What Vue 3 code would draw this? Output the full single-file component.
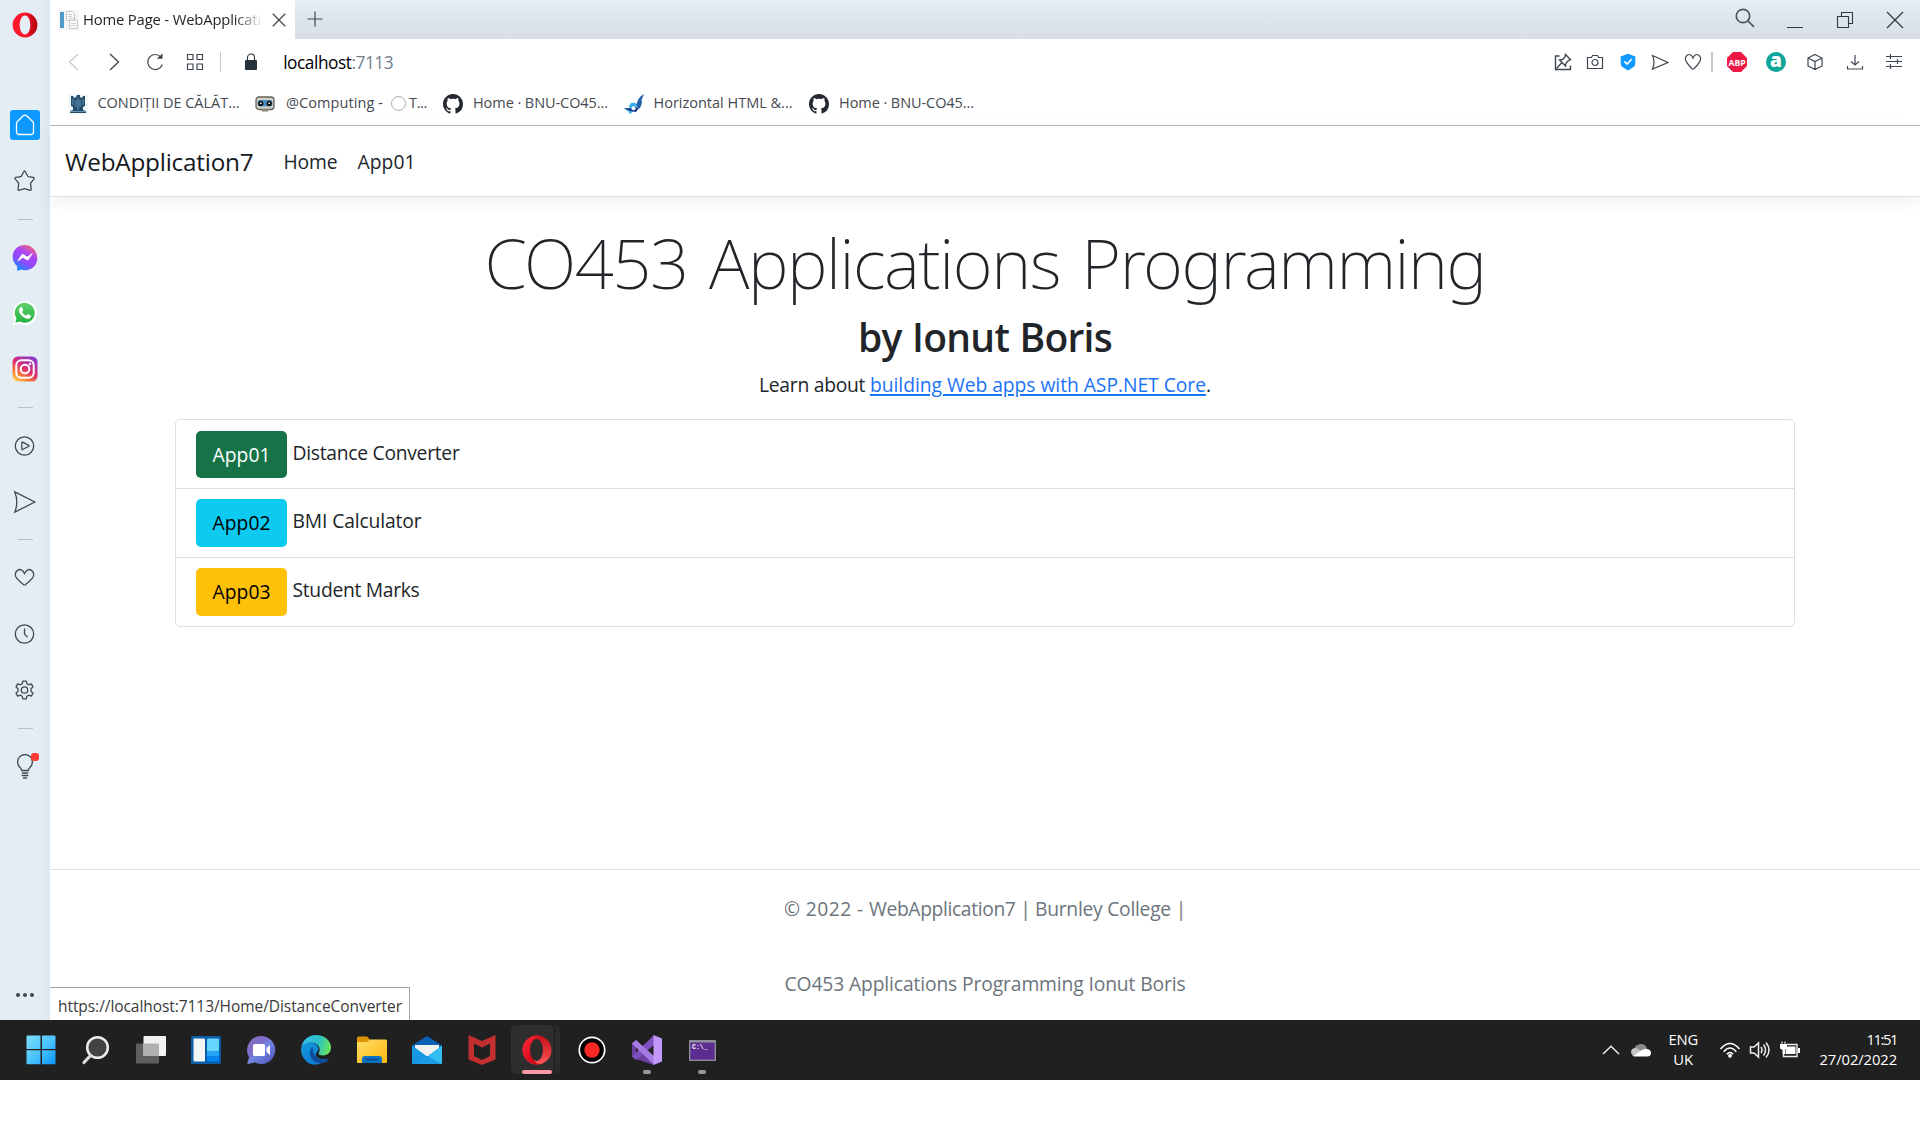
<script setup>
// Spreads the letters of a label so that it fills the given width in pixels.
const fit = (el, { value }) => {
  el.style.letterSpacing = '0px'
  const natural = el.getBoundingClientRect().width
  el.style.letterSpacing = `${(value - natural) / el.textContent.length}px`
}
const vFit = { mounted: fit }

const apps = [
  { code: 'App01', name: 'Distance Converter', kind: 'success', width: 167 },
  { code: 'App02', name: 'BMI Calculator', kind: 'info', width: 129 },
  { code: 'App03', name: 'Student Marks', kind: 'warning', width: 127 },
]
</script>

<template>
  <div class="screen">
    <div class="browser">
      <aside class="sidebar">
        <div class="logo">
          <svg width="26" height="26" viewBox="0 0 26 26">
            <defs>
              <linearGradient id="op1" x1="0" x2="1"><stop offset="0" stop-color="#ff1b2d" /><stop offset=".5" stop-color="#fa1629" /><stop offset="1" stop-color="#b0000e" /></linearGradient>
            </defs>
            <path fill="url(#op1)" fill-rule="evenodd" d="M13 .6a12.4 12.4 0 1 0 0 24.800a12.400 12.400 0 1 0 0-24.800ZM13 3.600c3.100 0 5.300 4 5.300 9.400s-2.200 9.400-5.300 9.400s-5.300-4-5.300-9.400s2.200-9.400 5.300-9.400Z" />
          </svg>
        </div>
        <div class="slot">
          <span class="home"><svg width="20" height="22" viewBox="0 0 20 22"><path d="M8.300 1.800a2.600 2.600 0 0 1 3.400 0l5.900 5.600a2.500 2.500 0 0 1 .9 1.900v8.700a2.500 2.500 0 0 1-2.500 2.500H4a2.500 2.500 0 0 1-2.500-2.500V9.300a2.500 2.500 0 0 1 .9-1.900Z" fill="none" stroke="#fff" stroke-width="1.300" /></svg></span>
        </div>
        <div class="slot">
          <svg class="line" width="24" height="24" viewBox="0 0 24 24"><path d="M10.700 2.800q.8-1.600 1.600 0l2.300 4.200q.3.500.8.600l4.700.7q1.900.4.700 1.800l-3 3.700q-.3.400-.2.900l.6 5.300q.1 1.900-1.600 1.200l-4.500-1.400q-.6-.2-1.200 0L6.600 21.200q-1.700.7-1.500-1.200l.6-5.300q0-.5-.3-.9L2.300 10.100q-1.200-1.400.7-1.800l4.600-.7q.6-.1.800-.6Z" /></svg>
        </div>
        <div class="sep"></div>
        <div class="slot">
          <svg width="26" height="27" viewBox="0 0 26 27">
            <defs><linearGradient id="ms" x1=".25" y1="1" x2=".8" y2="0"><stop offset="0" stop-color="#0a94ff" /><stop offset=".35" stop-color="#8e49ff" /><stop offset=".65" stop-color="#a946f5" /><stop offset="1" stop-color="#ff6a6c" /></linearGradient></defs>
            <path fill="url(#ms)" d="M13 1C6 1 .7 5.900.7 12.800c0 3.700 1.600 6.800 4 8.900.4.300.4.700.4 1.100l.1 3.200c0 .7.600 1 1.200.7l2.500-1.100c1.300.4 2.700.6 4.100.6 7 0 12.300-4.900 12.300-11.900S20 1 13 1Z" />
            <path fill="#fff" d="m5.600 16.600 3.900-5.900q1-1.300 2.400-.4l2.800 2.100q.5.300 1 0l4.300-3.100q.8-.5.500.4l-3.800 5.800q-.9 1.300-2.300.5l-3-2.100q-.5-.3-1 0l-4.100 3.100q-1 .5-.7-.4Z" />
          </svg>
        </div>
        <div class="slot">
          <svg width="26" height="26" viewBox="0 0 26 26">
            <defs><linearGradient id="wa" x1="0" y1="0" x2="0" y2="1"><stop offset="0" stop-color="#60d26a" /><stop offset="1" stop-color="#26b042" /></linearGradient></defs>
            <path fill="#fff" d="m.8 25.300 1.700-6.500A12 12 0 1 1 7.300 23.500Z" />
            <path fill="url(#wa)" d="m3.300 22.800 1.200-4.300A10 10 0 1 1 7.900 21.600Z" />
            <path fill="#fff" d="M8.600 7.300c.5-.4 1.200-.4 1.500.2l1 2.300c.2.400 0 .8-.3 1.200l-.7.900c.9 1.800 2.300 3 4.100 3.800l1-1.200c.3-.4.600-.4 1-.3l2.300 1.100c.5.300.6.600.4 1.200-.4 1.600-1.700 2.300-3 2.200-4.400-.3-8.300-4.300-8.900-7.700-.2-1.500.7-3 1.600-3.700Z" />
          </svg>
        </div>
        <div class="slot">
          <svg width="26" height="26" viewBox="0 0 26 26">
            <defs>
              <linearGradient id="ig" x1=".15" y1="1" x2=".8" y2="0"><stop offset="0" stop-color="#ffd45c" /><stop offset=".25" stop-color="#fa7b35" /><stop offset=".55" stop-color="#dc2c77" /><stop offset="1" stop-color="#833bd0" /></linearGradient>
            </defs>
            <rect x=".5" y=".5" width="25" height="25" rx="5.500" fill="url(#ig)" />
            <g fill="none" stroke="#fff" stroke-width="2"><rect x="4.300" y="4.300" width="17.400" height="17.400" rx="5" /><circle cx="13" cy="13" r="4.300" /></g><circle cx="18" cy="8" r="1.200" fill="#fff" />
          </svg>
        </div>
        <div class="sep"></div>
        <div class="slot"><svg class="line" width="24" height="24" viewBox="0 0 24 24"><circle cx="11.500" cy="12" r="9.200" /><path d="M8.800 8.800q0-1 .9-.6l6 3.100q.8.500 0 1l-6 3.200q-.9.400-.9-.6Z" /></svg></div>
        <div class="slot"><svg class="line" width="24" height="24" viewBox="0 0 24 24"><path d="m1.800 1.800 20 10.200-20 10.200q4-10.200 0-20.400Z" /></svg></div>
        <div class="sep"></div>
        <div class="slot"><svg class="line" width="24" height="24" viewBox="0 0 24 24"><path d="M11.500 7.500C9.500 3.200 6.700 3 4.900 4.100 1.700 6 1.600 9.800 3.600 12.100c2 2.300 4.900 4.900 7.100 6.700q.8.600 1.600 0c2.200-1.800 5.100-4.400 7.100-6.700 2-2.300 1.900-6.100-1.300-8-1.800-1.100-4.600-.9-6.600 3.400Z" /></svg></div>
        <div class="slot"><svg class="line" width="24" height="24" viewBox="0 0 24 24"><circle cx="11.500" cy="12" r="9.200" /><path d="M11.500 6.500V12l3 3.400" /></svg></div>
        <div class="slot"><svg class="line" width="24" height="24" viewBox="0 0 24 24"><circle cx="11.500" cy="12" r="3.200" /><path d="M9.800 3.100h3.400l.7 2.700 1.700 1 2.700-.9 1.700 3-2 1.900v2.400l2 1.900-1.700 3-2.700-.9-1.700 1-.7 2.700H9.800l-.7-2.700-1.700-1-2.700.9-1.700-3 2-1.900v-2.400L3 8.900l1.700-3 2.700.9 1.700-1Z" stroke-linejoin="round" /></svg></div>
        <div class="sep"></div>
        <div class="slot bulb">
          <svg class="line" width="24" height="26" viewBox="0 0 24 26"><path d="M8.700 16.500q-.2-1.500-1.500-2.900a7.400 7.400 0 1 1 9.600 0q-1.300 1.400-1.500 2.900ZM8.700 19h6.600M8.700 21.500h6.600M10 24h4" /></svg>
          <i></i>
        </div>
        <div class="dots"><i></i><i></i><i></i></div>
      </aside>

      <div class="window">
        <div class="tabs">
          <div class="tab">
            <svg width="20" height="20" viewBox="0 0 20 20"><rect width="20" height="20" fill="#f2f4f5" /><rect x="1" y="2" width="4" height="16" fill="#4f9bcb" /><path d="M7.500 1.500h6l2 2v7h-8ZM10.500 8.500h5l3 3v7h-8Z" fill="#fafafa" stroke="#c6cacd" /><path d="M9 4.500h4M9 6.500h4M12 13.500h5M12 15.500h5" stroke="#cdd1d4" /></svg>
            <span class="tab-title"><span v-fit="178">Home Page - WebApplicati</span></span>
            <svg width="14" height="14" viewBox="0 0 14 14"><path d="m.8.8 12.400 12.400M13.200.8.8 13.200" stroke="#444a50" stroke-width="1.300" /></svg>
          </div>
          <svg class="plus" width="16" height="16" viewBox="0 0 16 16"><path d="M8 .5v15M.5 8h15" stroke="#41474d" stroke-width="1.200" /></svg>
          <div class="controls">
            <svg class="find" width="20" height="20" viewBox="0 0 20 20"><g fill="none" stroke="#50565c" stroke-width="1.700"><circle cx="8" cy="8" r="6.700" /><path d="m12.800 12.800 6.200 6" /></g></svg>
            <svg width="16" height="16" viewBox="0 0 16 16"><path d="M0 12.500h16" stroke="#33383c" /></svg>
            <svg width="18" height="18" viewBox="0 0 18 18"><path d="M1.500 5.500h11v11h-11ZM5.500 5.500v-4h11v11h-4" fill="none" stroke="#33383c" stroke-width="1.100" /></svg>
            <svg width="18" height="18" viewBox="0 0 18 18"><path d="m1 1 16 16M17 1 1 17" stroke="#33383c" stroke-width="1.200" /></svg>
          </div>
        </div>

        <div class="toolbar">
          <span class="tool wide"><svg width="18" height="18" viewBox="0 0 18 18"><path d="m13 1-8.500 8 8.500 8" fill="none" stroke="#c3c6c9" stroke-width="1.200" /></svg></span>
          <span class="tool wide"><svg width="18" height="18" viewBox="0 0 18 18"><path d="m5 1 8.500 8L5 17" fill="none" stroke="#3c4248" stroke-width="1.300" /></svg></span>
          <span class="tool wide"><svg class="line" width="18" height="18" viewBox="0 0 18 18"><path d="M16.300 11.500A7.500 7.500 0 1 1 14.800 4" /><path d="M10.800 5.800H16.500V.5Z" fill="#3c4248" stroke="none" /></svg></span>
          <span class="tool wide"><svg class="line" width="18" height="18" viewBox="0 0 18 18"><path d="M1.500 1.500h5.500v5h-5.500ZM11 1.500h5.500v5H11ZM1.500 11h5.500v5.500h-5.500ZM11 11h5.500v5.500H11Z" /></svg></span>
          <span class="bar"></span>
          <svg class="lock" width="14" height="18" viewBox="0 0 14 18"><rect x="1" y="7" width="12" height="10" rx="1" fill="#263139" /><path d="M3.500 8V4.500a3.500 3.500 0 0 1 7 0V8" fill="none" stroke="#263139" stroke-width="1.100" /></svg>
          <span class="url" v-fit="110">localhost<em>:7113</em></span>
          <div class="tools">
            <span class="tool small"><svg class="line" width="18" height="18" viewBox="0 0 18 18"><path d="M5.500 3H1.500v13.500h15v-4" stroke-width="1.400" /><path d="m2.500 15.500 5-5.500M11.500 1.500l5 5-2 1-2.500 2.500-.5 3L5.500 7l3-.5L11 4Z" stroke-width="1.400" /></svg></span>
            <span class="tool small"><svg class="line" width="18" height="18" viewBox="0 0 18 18"><path d="M1.500 4.500h4l1-2h5l1 2h4V15.500h-15Z" /><circle cx="9" cy="9.500" r="3" /></svg></span>
            <span class="tool small"><svg width="16" height="18" viewBox="0 0 16 18"><path d="m8 .8 7.300 2.700v7.300q0 2.300-2.500 3.800L8 17.500l-4.800-2.900Q.7 13.100.7 10.800V3.500Z" fill="#0d99ff" /><path d="m4.300 8.400 2.700 2.600 4.800-5" fill="none" stroke="#fff" stroke-width="1.700" /></svg></span>
            <span class="tool small"><svg class="line" width="18" height="18" viewBox="0 0 18 18"><path d="M1.500 2.500 17 9.500 1.500 16q3-6.500 0-13.500Z" /></svg></span>
            <span class="tool small"><svg class="line" width="18" height="18" viewBox="0 0 18 18"><path d="M9 5C7.300 1.400 5 1 3.500 1.900.9 3.500.9 6.600 2.400 8.900c1.600 2.600 3.500 5 5.700 6.900q.9.700 1.800 0c2.200-1.900 4.100-4.300 5.700-6.900 1.500-2.300 1.500-5.400-1.100-7C13 1 10.700 1.400 9 5Z" /></svg></span>
            <span class="bar thick"></span>
            <span class="tool ext"><svg width="20" height="20" viewBox="0 0 20 20"><path d="M6 0h8l6 6v8l-6 6H6l-6-6V6Z" fill="#ed1944" /><text x="10" y="13.600" text-anchor="middle" textLength="17" lengthAdjust="spacingAndGlyphs" font-family="Open Sans, sans-serif" font-weight="700" font-size="9.500" fill="#fff">ABP</text></svg></span>
            <span class="tool ext"><svg width="20" height="20" viewBox="0 0 20 20"><circle cx="10" cy="10" r="10" fill="#0ea698" /><text x="10" y="15" text-anchor="middle" font-family="Open Sans, sans-serif" font-weight="800" font-size="19" fill="#fff">a</text></svg></span>
            <span class="tool ext"><svg class="line" width="18" height="18" viewBox="0 0 18 18"><path d="m9 1.500 7 3.500v8L9 16.500 2 13V5ZM2 5l7 3.500L16 5M9 8.500v8" /></svg></span>
            <span class="tool ext"><svg class="line" width="18" height="18" viewBox="0 0 18 18"><path d="M9 2v10M5 8.500 9 12l4-3.500M1.500 13v3h15v-3" /></svg></span>
            <span class="tool ext"><svg class="line" width="18" height="18" viewBox="0 0 18 18"><path d="M1 3.500h16M1 8.500h16M1 13.500h16M5.500 1v5M12.500 6v5M5.500 11v5" /></svg></span>
          </div>
        </div>

        <div class="bookmarks">
          <div class="mark">
            <svg width="20" height="20" viewBox="0 0 20 20"><rect width="20" height="20" fill="#f2f7fa" /><path fill="#234d6c" d="M9 1h3v2l2 1 1-2h2v10l-2 1v3l3 1v2H2v-2l3-1v-3l-2-1V2h2l1 2 2-1Z" /><path d="M5 5v6M15 5v6M8 6v7M12 6v7M10 4v12M2 17.500h16" stroke="#7ba7c4" stroke-width=".8" /></svg>
            <span v-fit="142">CONDIȚII DE CĂLĂT...</span>
          </div>
          <div class="mark second">
            <svg width="20" height="16" viewBox="0 0 20 16"><rect x="1" y="1" width="18" height="12.500" rx="3" fill="#d5d3c8" stroke="#626058" stroke-width="1.300" /><rect x="2.600" y="4" width="14.800" height="6.500" rx="2" fill="#4a90c4" /><circle cx="5.800" cy="7.400" r="2.600" fill="#111" /><circle cx="14.200" cy="7.400" r="2.600" fill="#111" /><path d="M5 6.500h1.500V8H5ZM13.500 6.500H15V8h-1.500Z" fill="#fff" /><path d="M6 13h8l-1 2.500H7Z" fill="#8a8579" /></svg>
            <span v-fit="97">@Computing -</span><i class="ring"></i><span v-fit="18">T...</span>
          </div>
          <div class="mark third">
            <svg width="20" height="20" viewBox="0 0 16 16"><path fill="#24292f" d="M8 0C3.580 0 0 3.580 0 8c0 3.540 2.290 6.530 5.470 7.590.4.070.55-.17.55-.38 0-.19-.01-.82-.01-1.490-2.010.37-2.530-.49-2.690-.94-.09-.23-.48-.94-.82-1.130-.28-.15-.68-.52-.01-.53.63-.01 1.080.58 1.230.82.72 1.210 1.870.87 2.330.66.07-.52.28-.87.51-1.070-1.780-.2-3.640-.89-3.640-3.950 0-.87.310-1.590.82-2.150-.08-.2-.36-1.020.08-2.120 0 0 .67-.21 2.200.82.64-.18 1.320-.27 2-.27s1.360.09 2 .27c1.530-1.040 2.200-.82 2.200-.82.44 1.100.16 1.920.08 2.120.51.56.82 1.270.82 2.150 0 3.070-1.870 3.750-3.650 3.950.29.25.54.73.54 1.480 0 1.070-.01 1.930-.01 2.200 0 .21.15.46.55.38A8.010 8.010 0 0 0 16 8c0-4.420-3.580-8-8-8Z" /></svg>
            <span v-fit="135">Home · BNU-CO45...</span>
          </div>
          <div class="mark fourth">
            <svg width="20" height="20" viewBox="0 0 20 20"><path d="M20 0q-4 2-5.500 5L12 11l3 4q4-5 2.500-9Z" fill="#2160a8" /><path d="M0 14.500q4-1 6 .5l-1-3 2-3 4-.5L13 12l-3 5-4 3-2-3Z" fill="#37aeea" /><path d="M0 14.500 6 17l6 1 3-4-3-1-4 1Z" fill="#20388c" /><circle cx="9.500" cy="14.300" r="2" fill="#fff" /></svg>
            <span v-fit="139">Horizontal HTML &amp;...</span>
          </div>
          <div class="mark fifth">
            <svg width="20" height="20" viewBox="0 0 16 16"><path fill="#24292f" d="M8 0C3.580 0 0 3.580 0 8c0 3.540 2.290 6.530 5.470 7.590.4.070.55-.17.55-.38 0-.19-.01-.82-.01-1.490-2.010.37-2.530-.49-2.690-.94-.09-.23-.48-.94-.82-1.130-.28-.15-.68-.52-.01-.53.63-.01 1.080.58 1.230.82.72 1.210 1.870.87 2.330.66.07-.52.28-.87.51-1.070-1.780-.2-3.640-.89-3.640-3.950 0-.87.310-1.590.82-2.150-.08-.2-.36-1.020.08-2.120 0 0 .67-.21 2.200.82.64-.18 1.320-.27 2-.27s1.360.09 2 .27c1.530-1.040 2.200-.82 2.200-.82.44 1.100.16 1.920.08 2.120.51.56.82 1.270.82 2.150 0 3.070-1.870 3.750-3.650 3.950.29.25.54.73.54 1.480 0 1.070-.01 1.930-.01 2.200 0 .21.15.46.55.38A8.010 8.010 0 0 0 16 8c0-4.420-3.580-8-8-8Z" /></svg>
            <span v-fit="135">Home · BNU-CO45...</span>
          </div>
        </div>

        <div class="page">
          <nav class="navbar">
            <a class="brand" v-fit="188.5">WebApplication7</a>
            <a v-fit="54">Home</a>
            <a v-fit="58">App01</a>
          </nav>
          <main>
            <h1><span v-fit="1001">CO453 Applications Programming</span></h1>
            <h2><span v-fit="254">by Ionut Boris</span></h2>
            <p class="learn"><span v-fit="111">Learn about </span><a v-fit="336">building Web apps with ASP.NET Core</a><span>.</span></p>
            <ul class="list">
              <li v-for="app in apps" :key="app.code">
                <a class="btn" :class="app.kind"><span v-fit="58">{{ app.code }}</span></a>
                <span class="name"><span v-fit="app.width">{{ app.name }}</span></span>
              </li>
            </ul>
          </main>
          <footer>
            <div><span v-fit="85">© 2022 - </span><span v-fit="166">WebApplication7 | </span><span v-fit="151">Burnley College |</span></div>
            <div><span v-fit="401">CO453 Applications Programming Ionut Boris</span></div>
          </footer>
          <div class="status"><span v-fit="344">https://localhost:7113/Home/DistanceConverter</span></div>
        </div>
      </div>
    </div>

    <div class="taskbar">
      <div class="task">
        <svg width="30" height="30" viewBox="0 0 30 30"><defs><linearGradient id="win" x1="0" y1="0" x2="1" y2="1"><stop offset="0" stop-color="#7fe0fc" /><stop offset=".5" stop-color="#4cc4fd" /><stop offset="1" stop-color="#0a95fb" /></linearGradient></defs><path fill="url(#win)" d="M1.500.500h13v13.500H.500V1.500q0-1 1-1ZM16 .500h12.500q1 0 1 1V14H16ZM.5 15.300h14v14h-13q-1 0-1-1ZM16 15.300h13.500v13q0 1-1 1H16Z" /></svg>
      </div>
      <div class="task">
        <svg width="30" height="30" viewBox="0 0 30 30"><circle cx="16.500" cy="12.500" r="10.300" fill="#434343" stroke="#ececec" stroke-width="2.500" /><path d="m9.500 20.500-6.500 7" stroke="#dcdcdc" stroke-width="3.300" stroke-linecap="round" /></svg>
      </div>
      <div class="task">
        <svg width="32" height="30" viewBox="0 0 32 30"><rect x="1" y="8.500" width="23" height="20" rx="1" fill="#5e5e5e" /><rect x="8.500" y="1" width="22.500" height="20" rx="1" fill="#f2f2f2" /><path d="M8.500 8.500H24V21H8.500Z" fill="#b0b0b0" /></svg>
      </div>
      <div class="task">
        <svg width="30" height="28" viewBox="0 0 30 28"><rect width="30" height="28" rx="1.500" fill="#0c5da9" /><rect x="2.500" y="2.500" width="11.500" height="23" rx="1" fill="#f3f5f7" /><rect x="16" y="2.500" width="12" height="13" rx="1" fill="#66d6ff" /><path d="M16 15.500h12v5H16Z" fill="#22a5f8" /><path d="M16 20.500h12v5H16Z" fill="#0585ee" /></svg>
      </div>
      <div class="task">
        <svg width="30" height="30" viewBox="0 0 30 30"><defs><linearGradient id="chat" x1="0" y1="0" x2="1" y2="1"><stop offset="0" stop-color="#9267b5" /><stop offset=".4" stop-color="#7a70cf" /><stop offset=".5" stop-color="#7386e0" /><stop offset="1" stop-color="#5052be" /></linearGradient></defs><path fill="url(#chat)" d="M15.500 1a14 14 0 1 1-6.500 26.500L2 29q-.8 0-.6-.8L3 22A14 14 0 0 1 15.500 1Z" /><rect x="7" y="9" width="12" height="12" rx="1.500" fill="#fff" /><path d="m20.500 13 3.500-3v10l-3.500-3Z" fill="#fff" /></svg>
      </div>
      <div class="task">
        <svg width="30" height="30" viewBox="0 0 30 30"><defs><linearGradient id="e1" x1="0" x2="1" y1=".3" y2=".5"><stop offset="0" stop-color="#36bdf0" /><stop offset=".55" stop-color="#2bc1c9" /><stop offset="1" stop-color="#69e45b" /></linearGradient><linearGradient id="e2" x1="0" y1="0" x2="1" y2="1"><stop offset="0" stop-color="#1499dc" /><stop offset="1" stop-color="#0877d3" /></linearGradient></defs><path fill="url(#e2)" d="M0 14C1 8 7 6.500 11 7.500c4 .8 7 4 6.500 7l-3 5q2 6 11 4.500C21 30 11 32 5 26 1 22 0 18 0 14Z" /><path fill="url(#e1)" d="M.2 12.500C1.500 5 7.500 0 15 0c9 0 15 6 15 12.500 0 5-4 8-8 8-3 0-4.500-.8-4.500-2 0-1 1.200-1.400 1.200-4C18.700 11 15 7.500 10.500 7.500c-5 0-9 2-10.300 5Z" /><path fill="#104c9b" d="M9 18.500c-.4-3 1-5.300 3-6.500-1 6 2.500 11.500 9 12.500 3 .3 5-.5 6-1 1 0 1 .5.5 1.200C23 31 9.500 29 9 18.500Z" /></svg>
      </div>
      <div class="task">
        <svg width="30" height="28" viewBox="0 0 30 28"><defs><linearGradient id="fold" x1="0" y1="0" x2="1" y2="1"><stop offset="0" stop-color="#ffdc69" /><stop offset="1" stop-color="#ffb80c" /></linearGradient></defs><path d="M0 2q0-1.500 1.500-1.500H10L13 3.500V8H0Z" fill="#dc9405" /><path d="M0 6h10l3-2.500h15.500Q30 3.500 30 5v21q0 1-1 1H1q-1 0-1-1Z" fill="url(#fold)" /><path d="M5 27v-4q0-3 3-3h14q3 0 3 3v4Z" fill="#0b71c2" /><path d="M9 23.500h12" stroke="#074a8b" stroke-width="1.300" stroke-linecap="round" /></svg>
      </div>
      <div class="task">
        <svg width="30" height="28" viewBox="0 0 30 28"><path d="M0 9.500 15 0l15 9.500V17H0Z" fill="#0960b5" /><path d="M3 9h24v11H3Z" fill="#f1f1f1" /><path d="M0 9.500 20 24l-5 4H1q-1 0-1-1Z" fill="#1798e5" /><path d="M30 9.500V27q0 1-1 1H5Z" fill="#32bdf3" /><path d="m5 28 11-8 13 8Z" fill="#1c9ce7" /></svg>
      </div>
      <div class="task">
        <svg width="28" height="30" viewBox="0 0 28 30"><path fill="#c32e2f" fill-rule="evenodd" d="m.5 0 13.500 6L27.500 0v24.500L14 30 .5 24.500ZM6 8.500V21l8 4 8-4V8.500l-8 4Z" /></svg>
      </div>
      <div class="task active">
        <svg width="30" height="30" viewBox="0 0 30 30"><defs><linearGradient id="op2" x1="0" y1="0" x2=".8" y2="1"><stop offset="0" stop-color="#ff2b39" /><stop offset="1" stop-color="#c70014" /></linearGradient><linearGradient id="op3" x1="0" y1="0" x2="0" y2="1"><stop offset="0" stop-color="#c50e19" /><stop offset="1" stop-color="#ff5555" /></linearGradient></defs><circle cx="15" cy="15" r="14.500" fill="url(#op3)" /><path fill="url(#op2)" d="M19 1.100A14.500 14.500 0 1 0 19 29 8 12 0 0 1 10 15 8 12 0 0 1 19 1.100Z" /><ellipse cx="14.500" cy="15" rx="6.500" ry="11" fill="#2c2c2c" /></svg>
      </div>
      <div class="task">
        <svg width="30" height="30" viewBox="0 0 30 30"><circle cx="15" cy="15" r="12.700" fill="#000" stroke="#fff" stroke-width="1.700" /><circle cx="15" cy="15" r="7.700" fill="#f62927" /></svg>
      </div>
      <div class="task open">
        <svg width="30" height="30" viewBox="0 0 30 30"><path fill="#6a419f" d="M0 8.500 4 5l18 20v5L4 24l-4-2.500Z" /><path fill="#222" d="m4 11.500 4 3.700-4 4Z" /><path fill="#7d50bf" d="M0 21.500 22 0v10L4 25Z" /><path fill="#a47ae3" d="m0 8.500 4-3.500 18 16v9Z" /><path fill="#c299fa" d="m21.500 0 8.500 3.500v23L21.500 30Z" /></svg>
      </div>
      <div class="task open">
        <svg width="27" height="21" viewBox="0 0 27 21"><rect x=".7" y=".7" width="25.600" height="19.600" fill="#5b2d90" stroke="#96929b" stroke-width="1.300" /><path d="M1 1.700h25" stroke="#96929b" stroke-width="1.600" /><text x="3" y="9" font-family="Liberation Mono, monospace" font-size="6.500" font-weight="700" fill="#fff">C:\_</text></svg>
      </div>

      <div class="tray">
        <svg class="chev" width="18" height="10" viewBox="0 0 18 10"><path d="m1 9 8-7.700L17 9" fill="none" stroke="#eee" stroke-width="1.500" /></svg>
        <svg class="cloud" width="20" height="14" viewBox="0 0 20 14"><path d="M3 7q1-6 7-6 5 0 6 5L9 9Z" fill="#8c8c8c" /><path d="M0 9q0-4 5-4l10 6-10 2Q0 12 0 9Z" fill="#c6c6c6" /><path d="m3 12.500 8-5.500q2-1.500 5-1 4 .5 4 4 0 3.500-4 3.500H4q-2 0-3-1.500Z" fill="#fff" /></svg>
        <div class="pair lang"><span v-fit="29.5">ENG</span><span v-fit="20">UK</span></div>
        <svg class="wifi" width="22" height="18" viewBox="0 0 22 18"><g fill="none" stroke="#fff" stroke-width="1.500"><path d="M1.500 8q9.500-11 19 0M4.700 10.700q6.300-7.500 12.600 0M7.800 13.300q3.200-3.500 6.400 0" /></g><circle cx="11" cy="14.800" r="1.900" fill="#fff" /></svg>
        <svg class="vol" width="22" height="18" viewBox="0 0 22 18"><path d="M1.500 6H5l4.500-4v14L5 12H1.500ZM12 6q2 3 0 6M14.500 3.500q4 5.500 0 11M17 1.500q6 7.500 0 15" fill="none" stroke="#eee" stroke-width="1.500" /></svg>
        <svg class="batt" width="22" height="18" viewBox="0 0 22 18"><path d="M8 3.500h10v12H4.500v-4" fill="none" stroke="#eee" stroke-width="1.400" /><path d="M8.500 5.500h8v7.500H6.500V10ZM19 7h2v5h-2ZM1 3h7v4.500l-2 1.500v4H3.500V9L1 7.500ZM2.500.5h1v3h-1ZM5.500.5h1v3h-1Z" fill="#fff" /></svg>
        <div class="pair clock"><span v-fit="30.5">11:51</span><span v-fit="77.5">27/02/2022</span></div>
      </div>
    </div>
  </div>
</template>

<style>
body {
  background: #fff;
}
</style>

<style scoped>
.screen {
  width: 1920px;
  height: 1129px;
  overflow: hidden;
  background: #fff;
  font-family: "Open Sans", "Noto Sans", sans-serif;
  color: #212529;
}
.screen svg {
  display: block;
  flex: none;
}
.screen span,
.screen a {
  white-space: pre;
}
.line {
  fill: none;
  stroke: #3f4851;
  stroke-width: 1.2;
}
.browser {
  display: flex;
  height: 1020px;
}

/* Side bar */
.sidebar {
  width: 50px;
  display: flex;
  flex-direction: column;
  background: linear-gradient(90deg, #e4ecf4 75%, #dfe7f0);
}
.sidebar .line {
  stroke-width: 1.3;
}
.logo {
  height: 97px;
  padding: 12px 0 0 12px;
  box-sizing: border-box;
}
.slot {
  height: 56px;
  display: flex;
  align-items: center;
  justify-content: center;
}
.sep {
  width: 15px;
  height: 1px;
  margin: 9.7px 0 9.7px 18px;
  background: #b3c0cd;
}
.home {
  width: 30px;
  height: 30px;
  border-radius: 3px;
  background: #0d99ff;
  display: flex;
  align-items: center;
  justify-content: center;
}
.bulb {
  position: relative;
}
.bulb i {
  position: absolute;
  left: 31px;
  top: 14px;
  width: 8px;
  height: 8px;
  border-radius: 3px;
  background: #ff3a30;
}
.dots {
  margin-top: auto;
  height: 50px;
  display: flex;
  align-items: center;
  justify-content: center;
  gap: 3px;
}
.dots i {
  width: 4px;
  height: 4px;
  border-radius: 50%;
  background: #3f4851;
}

/* Tabs */
.window {
  flex: 1;
  display: flex;
  flex-direction: column;
}
.tabs {
  height: 39px;
  display: flex;
  background: linear-gradient(#e4ecf4, #d7dee7);
}
.tab {
  width: 245px;
  box-sizing: border-box;
  padding-left: 9px;
  display: flex;
  align-items: center;
  background: #fff;
  font-size: 14.8px;
  line-height: 20px;
  color: #22272b;
}
.tab-title {
  width: 180px;
  margin: -2px 9px 0 4px;
  overflow: hidden;
  -webkit-mask-image: linear-gradient(90deg, #000 84%, transparent);
  mask-image: linear-gradient(90deg, #000 84%, transparent);
}
.plus {
  margin: 11px 0 0 12px;
}
.controls {
  margin-left: auto;
  padding-right: 16px;
  display: flex;
  align-items: center;
  gap: 32px;
}
.controls .find {
  margin: -3px 0 0;
}
.controls svg:nth-child(2) {
  margin: 6px 1px 0 0;
}

/* Address bar */
.toolbar {
  height: 46px;
  padding-left: 4px;
  display: flex;
  align-items: center;
}
.tool {
  display: flex;
  align-items: center;
  justify-content: center;
}
.wide {
  width: 40.3px;
}
.small {
  width: 32.5px;
}
.ext {
  width: 39.3px;
}
.bar {
  width: 1px;
  height: 20px;
  margin-left: 5px;
  background: #c3c8cc;
}
.bar.thick {
  width: 2px;
  margin: 0 4px 0 2px;
}
.lock {
  margin: 0 25px 0 23px;
}
.url {
  font-size: 17.3px;
  color: #000;
}
.url em {
  font-style: normal;
  color: #72808d;
}
.tools {
  margin-left: auto;
  padding-right: 6.5px;
  display: flex;
  align-items: center;
}

/* Bookmarks */
.bookmarks {
  height: 40px;
  display: flex;
  align-items: center;
  border-bottom: 1px solid #adb9c5;
  font-size: 14.5px;
  color: #444a50;
}
.mark {
  display: flex;
  align-items: center;
  height: 37px;
  margin-left: 18px;
  padding-bottom: 3px;
}
.mark span {
  margin-top: -2px;
}
.mark svg {
  margin-right: 9.5px;
}
.second {
  margin-left: 15.5px;
}
.second svg {
  margin-right: 11px;
}
.third {
  margin-left: 16px;
}
.third svg,
.fifth svg {
  margin-right: 10px;
}
.fourth {
  margin-left: 16px;
}
.fifth {
  margin-left: 16.5px;
}
.ring {
  width: 13px;
  height: 13px;
  margin: 0 3px 0 8px;
  border: 1px solid #aaa;
  border-radius: 50%;
}

/* Web page */
.page {
  position: relative;
  flex: 1;
  display: flex;
  flex-direction: column;
  font-size: 19.3px;
}
.navbar {
  height: 70px;
  padding: 0 0 0 15px;
  display: flex;
  align-items: center;
  gap: 20px;
  border-bottom: 1px solid #dee2e6;
  box-shadow: 0 6px 18px rgba(0, 0, 0, 0.06);
}
.brand {
  font-size: 24.3px;
  margin-right: 10px;
  color: #16191c;
}
main {
  width: 1620px;
  margin: 23px auto 0;
  text-align: center;
}
main span,
main a {
  display: inline-block;
}
h1 {
  margin: 0;
  line-height: 85px;
  font-family: "Noto Sans", "Open Sans", sans-serif;
  font-size: 68.6px;
  font-weight: 200;
  word-spacing: 5px;
}
h2 {
  margin: 8px 0 9px;
  line-height: 48px;
  font-size: 39px;
  font-weight: 600;
  word-spacing: 1px;
}
.learn {
  margin: 0 0 19px;
  line-height: 30px;
}
.learn a {
  color: #1a73f8;
  text-decoration: underline;
  text-decoration-thickness: 2px;
  text-underline-offset: 2px;
}
.list {
  margin: 0;
  padding: 0;
  list-style: none;
  border: 1px solid #dfdfdf;
  border-radius: 5px;
}
.list li {
  height: 68px;
  padding: 10.500px 0 0 20px;
  box-sizing: border-box;
  display: flex;
}
.list li + li {
  height: 69px;
  padding-top: 9.500px;
  border-top: 1px solid #dfdfdf;
}
.btn {
  width: 91px;
  height: 47.5px;
  line-height: 47px;
  border-radius: 5px;
  color: #000;
}
.list li + li .btn {
  height: 48px;
  line-height: 48.500px;
}
.success {
  background: #157347;
  color: #fff;
}
.info {
  background: #0dcaf0;
}
.warning {
  background: #ffc107;
}
.name {
  margin-left: 5.500px;
  line-height: 44px;
}
footer {
  height: 150px;
  margin-top: auto;
  border-top: 1px solid #dee2e6;
  line-height: 77px;
  text-align: center;
  color: #6c757d;
}
footer div {
  height: 75px;
}
footer span,
.status span {
  display: inline-block;
}
.status {
  position: absolute;
  left: 0;
  bottom: 0;
  width: 351px;
  height: 32px;
  padding-left: 8px;
  border: 1px solid #a2a2a2;
  border-width: 1px 1px 0 0;
  background: #fff;
  font-size: 15.500px;
  line-height: 36px;
  color: #3a3a3a;
}

/* Task bar */
.taskbar {
  height: 60px;
  padding-left: 13.4px;
  display: flex;
  background: #202020;
}
.task {
  width: 55.1px;
  display: flex;
  align-items: center;
  justify-content: center;
  position: relative;
}
.active::before {
  content: "";
  position: absolute;
  left: 2px;
  top: 5px;
  width: 43px;
  height: 49px;
  border-radius: 5px;
  background: #2e2e2e;
  box-shadow: 1px 0 0 #191919, 6px 0 0 #2b2b2b;
}
.active svg {
  position: relative;
}
.active::after,
.open::after {
  content: "";
  position: absolute;
  bottom: 6px;
  width: 30px;
  height: 4px;
  border-radius: 2px;
  background: #ff99a4;
}
.open::after {
  width: 8px;
  background: #9a9a9a;
}
.tray {
  margin-left: auto;
  padding-right: 23px;
  display: flex;
  align-items: center;
  color: #fff;
  font-size: 14.8px;
}
.pair {
  display: flex;
  flex-direction: column;
  align-items: center;
  margin-top: -2px;
  line-height: 20px;
}
.chev {
  margin-right: 11px;
}
.lang {
  margin: -2px 21px 0 18px;
}
.wifi,
.vol {
  margin-right: 8px;
}
.clock {
  margin-left: 18.5px;
  align-items: flex-end;
}
</style>
